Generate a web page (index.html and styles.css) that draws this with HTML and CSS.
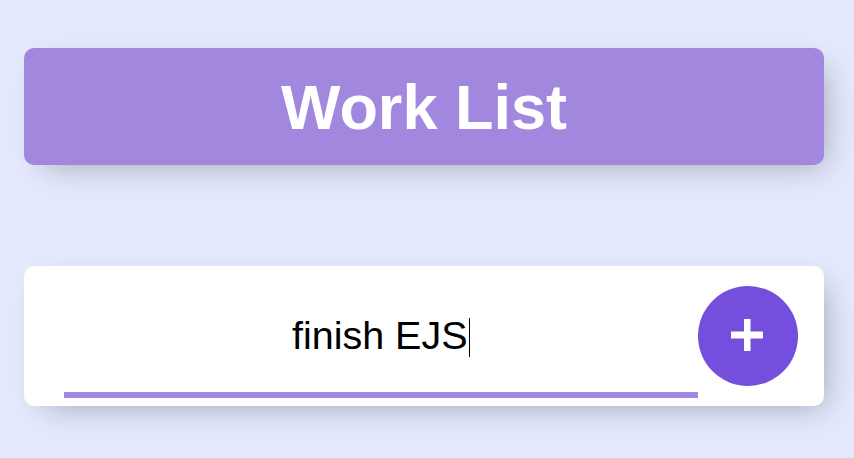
FILE: index.html
```html
<!DOCTYPE html>
<html lang="en">
<head>
<meta charset="utf-8">
<title>Work List</title>
<link rel="stylesheet" href="styles.css">
</head>
<body>
<main class="page">
  <header class="box heading">
    <h1 class="title">Work List</h1>
  </header>
  <form class="box item-form">
    <div class="field">
      <span class="typed">finish EJS</span><span class="caret"></span>
    </div>
    <button class="add" type="button" aria-label="Add">
      <svg width="34" height="34" viewBox="0 0 34 34" aria-hidden="true">
        <rect x="0" y="13.5" width="32" height="7" fill="#fff"/>
        <rect x="13" y="1" width="6.5" height="32" fill="#fff"/>
      </svg>
    </button>
  </form>
</main>
</body>
</html>
```
FILE: styles.css
```css
html, body {
  margin: 0;
  padding: 0;
  background: #e4e9fd;
}
body {
  font-family: "Liberation Sans", Arial, Helvetica, sans-serif;
  width: 854px;
  height: 458px;
  overflow: hidden;
}
.page {
  width: 800px;
  margin: 48px 0 0 24px;
  display: flex;
  flex-direction: column;
  gap: 101px;
}
.box {
  border-radius: 10px;
  box-shadow: 10px 10px 30px -10px rgba(0, 0, 0, 0.3);
}
.heading {
  background: #a187de;
  height: 117px;
  display: flex;
  align-items: center;
  justify-content: center;
}
.title {
  margin: 0;
  color: #fff;
  font-size: 63px;
  font-weight: 700;
  line-height: 1;
  padding-top: 2px;
}
.item-form {
  background: #fff;
  height: 140px;
  box-sizing: border-box;
  padding: 12px 26px 8px 40px;
  display: flex;
  align-items: flex-start;
}
.field {
  width: 634px;
  height: 120px;
  box-sizing: border-box;
  box-shadow: inset 0 -6px 0 0 #a187de;
  display: flex;
  align-items: center;
  justify-content: center;
  padding-bottom: 4px;
  font-size: 39.5px;
  color: #000;
}
.typed {
  line-height: 1;
}
.caret {
  display: inline-block;
  width: 1.5px;
  height: 39px;
  background: #000;
  margin-left: 1px;
  margin-top: 2px;
}
.add {
  width: 100px;
  height: 100px;
  margin-top: 8px;
  border: 0;
  border-radius: 50%;
  background: #744edd;
  display: flex;
  align-items: center;
  justify-content: center;
  padding: 0;
  cursor: pointer;
}
.add svg {
  display: block;
  margin-left: -1px;
  margin-top: -2px;
}
```
